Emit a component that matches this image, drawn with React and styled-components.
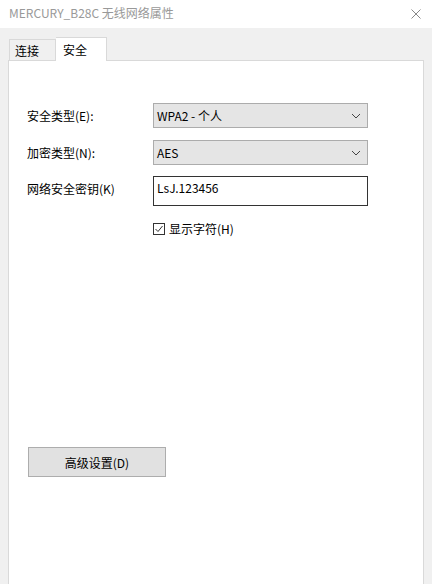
import React from "react";
import styled, { createGlobalStyle } from "styled-components";

const Global = createGlobalStyle`
  html, body { margin: 0; padding: 0; background: #f0f0f0; }
  body { font-family: "Noto Sans CJK SC", "Noto Sans", sans-serif; font-size: 12px; color: #000; }
`;

const Window = styled.div`
  width: 432px;
  height: 584px;
  background: #f0f0f0;
  display: flex;
  flex-direction: column;
  overflow: hidden;
`;

const TitleBar = styled.div`
  height: 28px;
  flex: none;
  background: #fff;
  display: flex;
  align-items: center;
  justify-content: space-between;
  padding: 0 11px 0 9px;
`;

const Title = styled.span`
  color: #999;
  font-size: 12px;
  font-family: "Noto Sans CJK SC", sans-serif;
  margin-top: -3px;
`;

const Body = styled.div`
  flex: 1;
  display: flex;
  flex-direction: column;
  padding: 9px 8px 0 8px;
`;

const Tabs = styled.div`
  display: flex;
  align-items: flex-end;
  height: 24px;
  padding-left: 1px;
  position: relative;
  z-index: 1;
  margin-bottom: -1px;
`;

const Tab = styled.div`
  height: ${(p) => (p.$active ? "24px" : "22px")};
  width: ${(p) => p.$w}px;
  box-sizing: border-box;
  border: 1px solid #d9d9d9;
  border-bottom: ${(p) => (p.$active ? "none" : "1px solid #d9d9d9")};
  border-left: ${(p) => (p.$first ? "1px solid #d9d9d9" : "none")};
  background: ${(p) => (p.$active ? "#fff" : "#f0f0f0")};
  padding-left: ${(p) => (p.$active ? 7 : 5)}px;
  display: flex;
  align-items: center;
  font-size: 12px;
  line-height: 1;
  padding-top: ${(p) => (p.$active ? 0 : 2)}px;
`;

const Panel = styled.div`
  flex: 1;
  background: #fff;
  border: 1px solid #d9d9d9;
  border-bottom: none;
  display: flex;
  flex-direction: column;
  padding: 42px 0 0 18px;
`;

const Form = styled.div`
  display: grid;
  grid-template-columns: 126px 215px;
  row-gap: 12px;
  align-items: start;
`;

const Label = styled.div`
  font-size: 12px;
  line-height: 25px;
  height: 25px;
  white-space: nowrap;
  margin-top: ${(p) => p.$shift || 0}px;
`;

const Select = styled.div`
  height: 25px;
  box-sizing: border-box;
  background: #e5e5e5;
  border: 1px solid #acacac;
  display: flex;
  align-items: center;
  justify-content: space-between;
  padding: 0 6px 0 3px;
  font-size: 12px;
`;

const TextBox = styled.div`
  height: 30px;
  margin-top: -1px;
  box-sizing: border-box;
  border: 1px solid #333;
  padding: 1px 3px;
  font-size: 12px;
  line-height: 20px;
`;

const CheckRow = styled.div`
  grid-column: 2;
  display: flex;
  align-items: center;
  gap: 4px;
  margin-top: 2px;
  font-size: 12px;
`;

const Box = styled.div`
  width: 12px;
  height: 12px;
  box-sizing: border-box;
  border: 1px solid #333;
  display: flex;
  align-items: center;
  justify-content: center;
  background: #fff;
`;

const Spacer = styled.div`
  height: 1px;
  flex: none;
  margin-top: 209px;
`;

const Button = styled.div`
  width: 138px;
  height: 30px;
  box-sizing: border-box;
  margin-left: 1px;
  background: #e1e1e1;
  border: 1px solid #adadad;
  display: flex;
  align-items: center;
  justify-content: center;
  font-size: 12px;
`;

const Chevron = () => (
  <svg width="10" height="6" viewBox="0 0 10 6">
    <path d="M1 1 L5 5 L9 1" fill="none" stroke="#444" strokeWidth="1" />
  </svg>
);

export default function App() {
  return (
    <Window>
      <Global />
      <TitleBar>
        <Title>MERCURY_B28C 无线网络属性</Title>
        <svg width="10" height="10" viewBox="0 0 10 10">
          <path d="M0.5 0.5 L9.5 9.5 M9.5 0.5 L0.5 9.5" stroke="#888" strokeWidth="1" />
        </svg>
      </TitleBar>
      <Body>
        <Tabs>
          <Tab $first $w={47}>连接</Tab>
          <Tab $active $w={51}>安全</Tab>
        </Tabs>
        <Panel>
          <Form>
            <Label>安全类型(E):</Label>
            <Select>
              <span>WPA2 - 个人</span>
              <Chevron />
            </Select>
            <Label>加密类型(N):</Label>
            <Select>
              <span>AES</span>
              <Chevron />
            </Select>
            <Label $shift={-1}>网络安全密钥(K)</Label>
            <TextBox>LsJ.123456</TextBox>
            <CheckRow>
              <Box>
                <svg width="10" height="10" viewBox="0 0 10 10">
                  <path d="M1.5 5 L4 7.5 L8.5 2" fill="none" stroke="#333" strokeWidth="1" />
                </svg>
              </Box>
              <span>显示字符(H)</span>
            </CheckRow>
          </Form>
          <Spacer />
          <Button>高级设置(D)</Button>
        </Panel>
      </Body>
    </Window>
  );
}
